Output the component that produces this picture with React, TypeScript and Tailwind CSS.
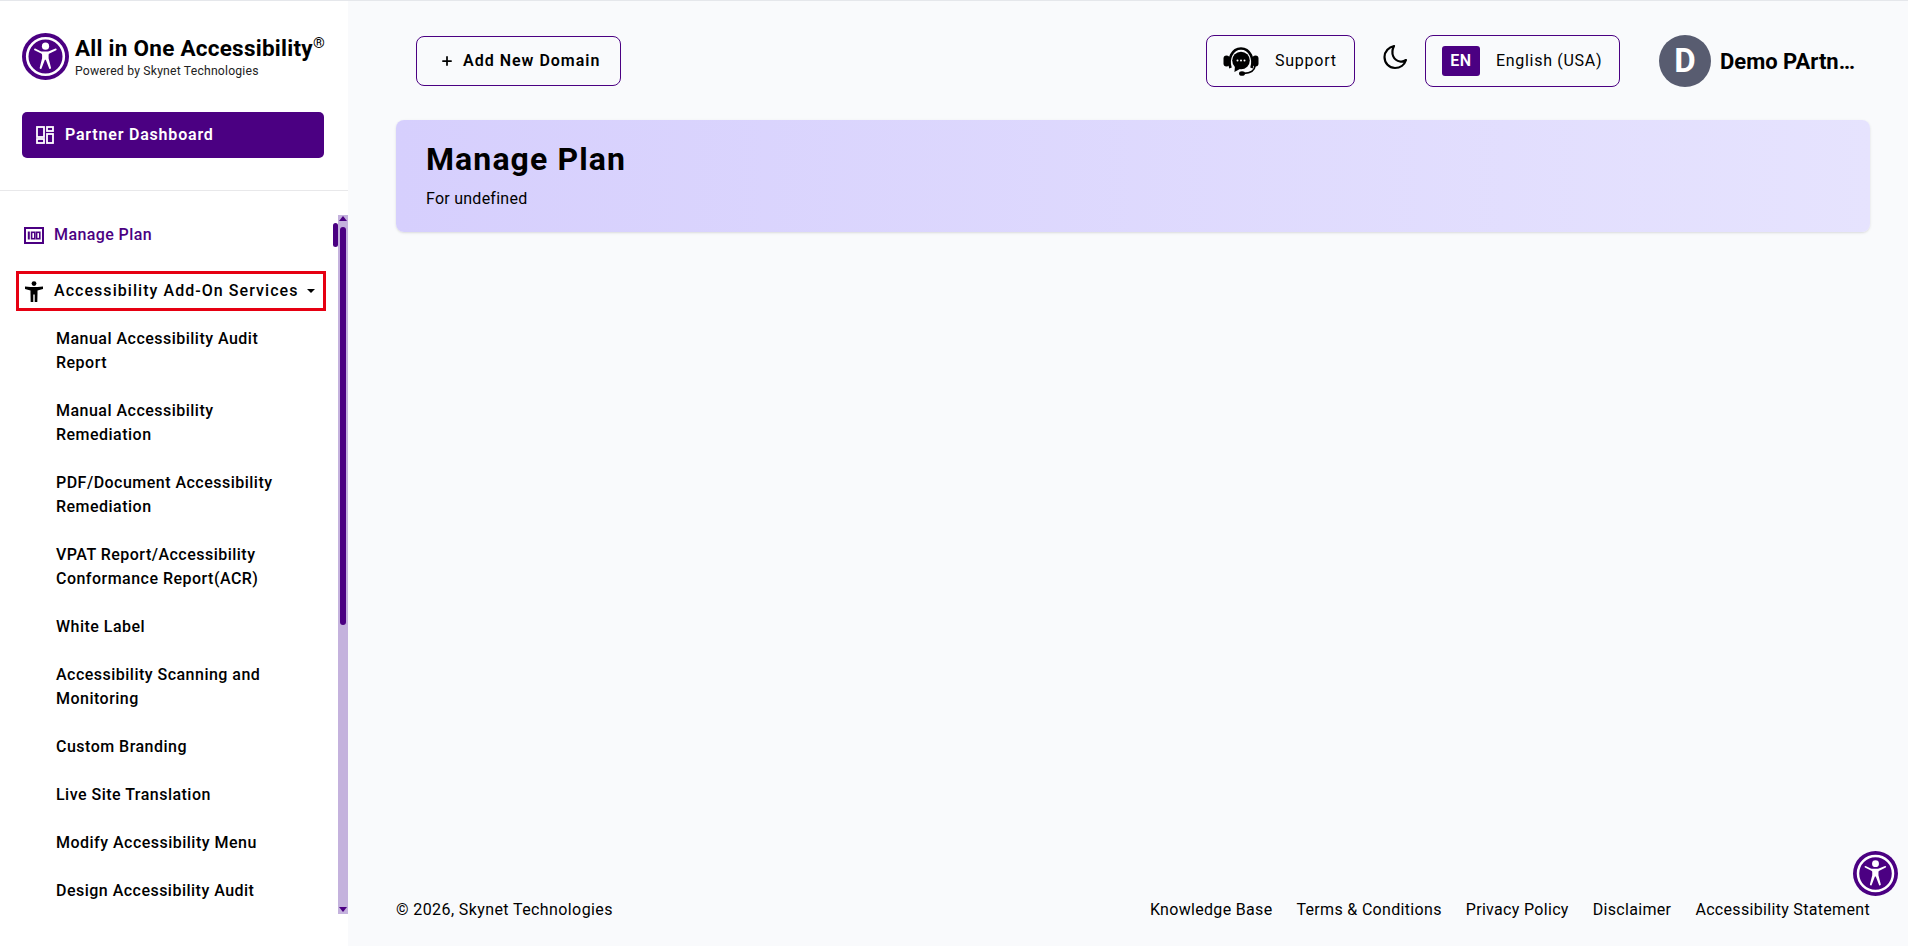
import { Plus } from "lucide-react";

function Figure({ className }: { className?: string }) {
  return (
    <svg viewBox="0 0 47 47" className={className} aria-hidden="true">
      <circle cx="23.5" cy="23.5" r="23.5" fill="#4b0082" />
      <circle cx="23.5" cy="23.5" r="18.3" fill="none" stroke="#fff" strokeWidth="2.6" />
      <circle cx="23.5" cy="13.2" r="3.6" fill="#fff" />
      <path
        d="M13.2 15.6c-.9-.3-1.6 1-.7 1.6l6.700 3.400c.6.3.9.8.9 1.400v3.300l-2.400 9.500c-.3 1.100 1.300 1.700 1.800.6l3.200-8.200c.2-.6 1.100-.6 1.300 0l3.200 8.200c.5 1.100 2.100.5 1.800-.6l-2.400-9.500V22c0-.6.3-1.100.9-1.400l6.700-3.400c.9-.6.2-1.900-.7-1.600l-6.600 2.600c-.6.2-1.200.3-1.800.3h-4.700c-.6 0-1.200-.1-1.800-.3z"
        fill="#fff"
      />
    </svg>
  );
}

function SupportIcon() {
  return (
    <svg viewBox="0 0 36 32" className="h-8 w-9 shrink-0" aria-hidden="true">
      <path d="M7.500 23C4.500 14 9 3.500 18 3.500S31.500 14 28.500 23" fill="none" stroke="#000" strokeWidth="2.6" />
      <rect x="0.500" y="10.500" width="6" height="11" rx="3" fill="#000" />
      <rect x="29.500" y="10.500" width="6" height="11" rx="3" fill="#000" />
      <circle cx="18" cy="15.500" r="8.800" fill="#000" />
      <path d="M12 21l-.6 6 6.400-3.500z" fill="#000" />
      <circle cx="14.500" cy="15.500" r="1" fill="#fff" />
      <circle cx="18" cy="15.500" r="1" fill="#fff" />
      <circle cx="21.500" cy="15.500" r="1" fill="#fff" />
      <path d="M32 21c-.5 4.500-4 7-11 7.300" fill="none" stroke="#000" strokeWidth="1.800" />
      <ellipse cx="19" cy="28.500" rx="3" ry="2.300" fill="#000" />
    </svg>
  );
}

const items = [
  "Manual Accessibility Audit Report",
  "Manual Accessibility Remediation",
  "PDF/Document Accessibility Remediation",
  "VPAT Report/Accessibility Conformance Report(ACR)",
  "White Label",
  "Accessibility Scanning and Monitoring",
  "Custom Branding",
  "Live Site Translation",
  "Modify Accessibility Menu",
  "Design Accessibility Audit",
];

const footer = ["Knowledge Base", "Terms & Conditions", "Privacy Policy", "Disclaimer", "Accessibility Statement"];

export default function App() {
  return (
    <div className="relative flex h-[946px] w-[1908px] overflow-hidden border-t border-[#e5e7eb] bg-[#f9fafc] text-black [font-family:Roboto,sans-serif]">
      <aside className="flex h-full w-[348px] shrink-0 flex-col bg-white">
        <div className="border-b border-[#e8e8ea] pb-[32px] pl-[22px] pr-6 pt-8">
          <div className="flex items-center gap-[6px]">
            <Figure className="h-[47px] w-[47px] shrink-0" />
            <div className="flex flex-col">
              <div className="relative text-[22.5px] font-bold leading-[26px] tracking-[0.25px] whitespace-nowrap">
                All in One Accessibility<span className="relative top-[-8px] text-[15px] font-normal">®</span>
              </div>
              <div className="text-[12.2px] leading-[15px] tracking-[0.2px] text-[#222] whitespace-nowrap">Powered by Skynet Technologies</div>
            </div>
          </div>
          <div className="mt-[32px] flex h-[46px] items-center gap-[11px] rounded-[5px] bg-[#4b0082] pl-[14px] text-white">
            <svg viewBox="0 0 18 18" className="h-[18px] w-[18px]" fill="none" stroke="#fff" strokeWidth="1.800" aria-hidden="true">
              <rect x="1" y="1" width="7" height="10" />
              <rect x="11" y="1" width="6" height="4" />
              <rect x="1" y="13" width="7" height="4" />
              <rect x="11" y="8" width="6" height="9" />
            </svg>
            <span className="text-[16px] font-semibold tracking-[0.8px]">Partner Dashboard</span>
          </div>
        </div>
        <div className="relative flex-1">
          <nav className="pt-[24px]">
            <div className="flex h-[40px] items-center gap-[10px] pl-6 text-[#4b0082]">
              <svg viewBox="0 0 20 17" className="h-[17px] w-5" aria-hidden="true">
                <rect x="1" y="1" width="18" height="15" fill="none" stroke="#4b0082" strokeWidth="2" />
                <rect x="3.800" y="4.500" width="2" height="8" fill="#4b0082" />
                <rect x="7.600" y="5.300" width="3.200" height="6.400" fill="none" stroke="#4b0082" strokeWidth="1.600" />
                <rect x="12.600" y="5.300" width="3.200" height="6.400" fill="none" stroke="#4b0082" strokeWidth="1.600" />
              </svg>
              <span className="text-[16px] font-medium tracking-[0.4px]">Manage Plan</span>
            </div>
            <div className="ml-4 mt-[16px] flex h-[40px] w-[310px] items-center gap-[11px] border-[3px] border-[#e60012] pl-[6px]">
              <svg viewBox="0 0 18 21" className="h-[21px] w-[18px]" aria-hidden="true">
                <circle cx="9" cy="2.600" r="2.400" fill="#000" />
                <path d="M0 5.500 5.500 6h7L18 5.500V8l-5.500 1.500v3L12.300 21H9.700v-7.500H8.300V21H5.700l-.2-8.500v-3L0 8z" fill="#000" />
              </svg>
              <span className="text-[16px] font-medium tracking-[1.05px] whitespace-nowrap">Accessibility Add-On Services</span>
              <span className="ml-[-2px] h-0 w-0 border-x-[4px] border-t-[4px] border-x-transparent border-t-black" />
            </div>
            <ul className="mt-1 pl-[56px]">
              {items.map((t) => (
                <li key={t} className="w-[240px] py-3 text-[16px] font-medium leading-6 tracking-[0.48px]">{t}</li>
              ))}
            </ul>
          </nav>
          <div className="absolute right-0 top-6 bottom-[32px] flex w-[10px] flex-col bg-[#c4b2dd]">
            <span className="mx-auto mt-[1px] h-0 w-0 border-x-[4px] border-b-[5px] border-x-transparent border-b-[#4b0082]" />
            <div className="mx-auto mt-[6px] h-[398px] w-[6px] rounded-full bg-[#4b0082]" />
            <span className="mx-auto mt-auto mb-[2px] h-0 w-0 border-x-[4px] border-t-[5px] border-x-transparent border-t-[#4b0082]" />
          </div>
          <div className="absolute left-[333px] top-8 h-6 w-[5px] rounded-full bg-[#4b0082]" />
        </div>
      </aside>

      <main className="flex h-full min-w-0 flex-1 flex-col pb-6 pl-12 pr-[38px] pt-[34px]">
        <header className="flex h-[52px] items-center justify-between pl-5 pr-3">
          <button className="flex h-[50px] w-[205px] items-center gap-[9px] rounded-lg border border-[#4b0082] pl-[23px] text-[16px] font-semibold tracking-[1px]">
            <Plus className="h-[14px] w-[14px]" strokeWidth={3} />
            Add New Domain
          </button>
          <div className="flex items-center">
            <div className="flex h-[52px] w-[149px] items-center gap-4 rounded-lg border border-[#4b0082] pl-4 text-[16px] tracking-[0.75px]">
              <SupportIcon />
              Support
            </div>
            <svg viewBox="0 0 26 26" className="ml-[27px] mr-[17px] mb-2 h-[26px] w-[26px]" aria-hidden="true">
              <path d="M12 2C7 3 2.500 7.500 2.500 13c0 6 4.500 11 10.500 11 5 0 9.500-3 11-8-2 1.500-4 2-6 1.500C12 16.500 8 10 12 2z" fill="none" stroke="#000" strokeWidth="2.200" strokeLinejoin="round" />
            </svg>
            <div className="flex h-[52px] w-[195px] items-center gap-4 rounded-lg border border-[#4b0082] pl-4 text-[16px] tracking-[0.7px]">
              <span className="flex h-[30px] w-[38px] items-center justify-center rounded-[3px] bg-[#4b0082] font-semibold text-white">EN</span>
              English (USA)
            </div>
            <div className="ml-[39px] flex h-[52px] w-[52px] shrink-0 items-center justify-center rounded-full bg-[#585c70] text-[33px] font-bold text-white">D</div>
            <div className="ml-[9px] w-[138px] truncate text-[22px] font-bold">Demo PArtner</div>
          </div>
        </header>
        <section className="mt-[33px] flex h-[112px] flex-col rounded-lg bg-gradient-to-r from-[#d6cffd] to-[#e6e3fe] px-[30px] pt-[20px] shadow-sm">
          <h1 className="text-[32px] font-bold leading-[38px] tracking-[1.1px]">Manage Plan</h1>
          <p className="mt-[9px] text-[16px] leading-6 tracking-[0.25px]">For undefined</p>
        </section>
        <footer className="mt-auto flex items-center justify-between text-[16px] leading-6">
          <span className="tracking-[0.4px]">© 2026, Skynet Technologies</span>
          <div className="flex gap-6 tracking-[0.32px]">
            {footer.map((f) => (
              <span key={f}>{f}</span>
            ))}
          </div>
        </footer>
      </main>
      <Figure className="absolute left-[1853px] top-[850px] h-[45px] w-[45px]" />
    </div>
  );
}
